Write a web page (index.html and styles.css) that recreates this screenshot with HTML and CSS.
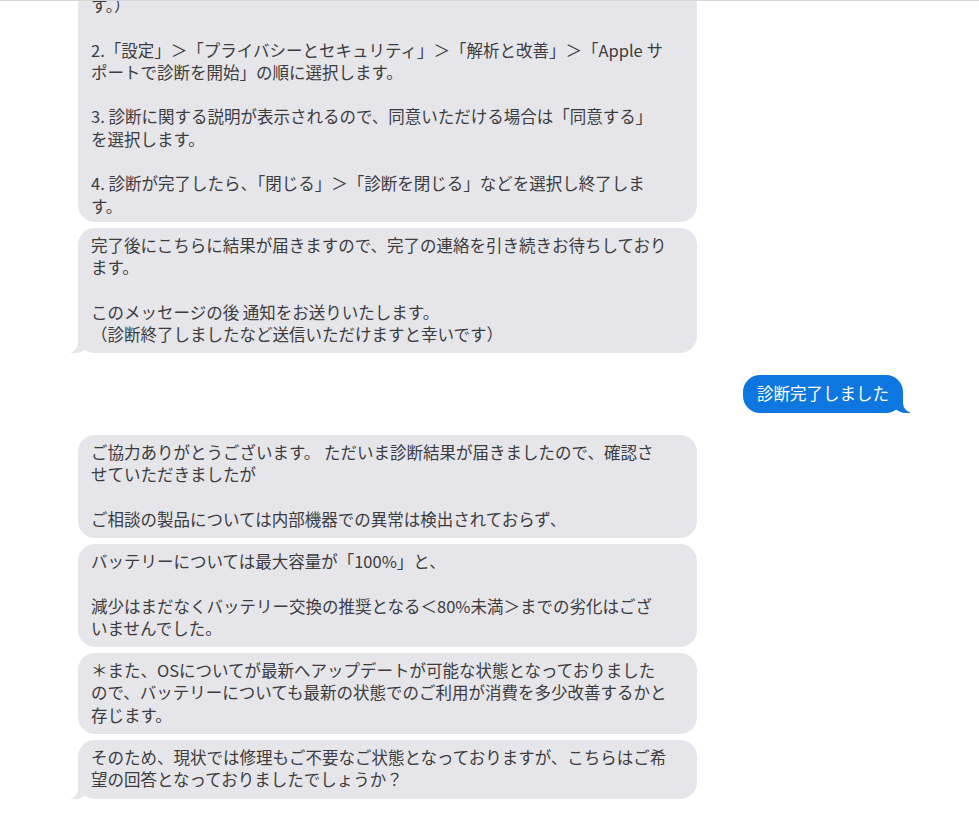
FILE: index.html
```html
<!DOCTYPE html>
<html lang="ja">
  <head>
    <meta charset="UTF-8" />
    <meta name="viewport" content="width=device-width, initial-scale=1.0" />
    <title>メッセージ</title>
    <link rel="stylesheet" href="styles.css">
  </head>
  <body>
    <div class="screen">
      <div class="thread">
        <div class="group in cut">
          <div class="bubble">
            <p>す。）</p>
            <p>2.「設定」＞「プライバシーとセキュリティ」＞「解析と改善」＞「Apple サ<br>ポートで診断を開始」の順に選択します。</p>
            <p>3. 診断に関する説明が表示されるので、同意いただける場合は「同意する」<br>を選択します。</p>
            <p>4. 診断が完了したら、「閉じる」＞「診断を閉じる」などを選択し終了しま<br>す。</p>
          </div>
          <div class="bubble tail">
            <p>完了後にこちらに結果が届きますので、完了の連絡を引き続きお待ちしており<br>ます。</p>
            <p>このメッセージの後 通知をお送りいたします。<br>（診断終了しましたなど送信いただけますと幸いです）</p>
          </div>
        </div>

        <div class="group out">
          <div class="bubble tail">
            <p>診断完了しました</p>
          </div>
        </div>

        <div class="group in">
          <div class="bubble">
            <p>ご協力ありがとうございます。 ただいま診断結果が届きましたので、確認さ<br>せていただきましたが</p>
            <p>ご相談の製品については内部機器での異常は検出されておらず、</p>
          </div>
          <div class="bubble">
            <p>バッテリーについては最大容量が「100%」と、</p>
            <p>減少はまだなくバッテリー交換の推奨となる＜80%未満＞までの劣化はござ<br>いませんでした。</p>
          </div>
          <div class="bubble">
            <p>＊また、OSについてが最新へアップデートが可能な状態となっておりました<br>ので、バッテリーについても最新の状態でのご利用が消費を多少改善するかと<br>存じます。</p>
          </div>
          <div class="bubble tail">
            <p>そのため、現状では修理もご不要なご状態となっておりますが、こちらはご希<br>望の回答となっておりましたでしょうか？</p>
          </div>
        </div>
      </div>
    </div>
  </body>
</html>
```

FILE: styles.css
```css
body {
  margin: 0;
  background-color: #fff;
  font-family: "Noto Sans CJK JP", "Noto Sans", sans-serif;
}
.screen {
  height: 819px;
  overflow: hidden;
  border-top: 1px solid #d6d6d8;
  box-sizing: border-box;
}
.thread {
  display: flex;
  flex-direction: column;
  gap: 22px;
  margin: 0 76px 0 78px;
}
.group {
  display: flex;
  flex-direction: column;
  gap: 6px;
}
.cut {
  margin-top: -13px;
}
.cut .bubble:first-child {
  padding-bottom: 5px;
}
.out {
  align-items: flex-end;
}
.bubble {
  position: relative;
  border-radius: 17px;
  padding: 6px 13px 8px;
  font-size: 16.5px;
  line-height: 22.3px;
  white-space: nowrap;
}
.bubble p {
  margin: 0;
}
.bubble p + p {
  margin-top: 22.3px;
}
.in .bubble {
  width: 619px;
  box-sizing: border-box;
  background-color: #e5e5ea;
  color: #3c3c3e;
}
.out .bubble {
  background-color: #0e77df;
  color: #fff;
  padding: 7px 14px 8px;
}
.tail::before,
.tail::after {
  content: "";
  position: absolute;
  bottom: 0;
  height: 20px;
}
.in .tail::before {
  left: -7px;
  width: 20px;
  background-color: #e5e5ea;
  border-bottom-right-radius: 16px;
}
.in .tail::after {
  left: -10px;
  width: 10px;
  background-color: #fff;
  border-bottom-right-radius: 10px;
}
.out .tail::before {
  right: -7px;
  width: 20px;
  background-color: #0e77df;
  border-bottom-left-radius: 16px;
}
.out .tail::after {
  right: -10px;
  width: 10px;
  background-color: #fff;
  border-bottom-left-radius: 10px;
}
```
